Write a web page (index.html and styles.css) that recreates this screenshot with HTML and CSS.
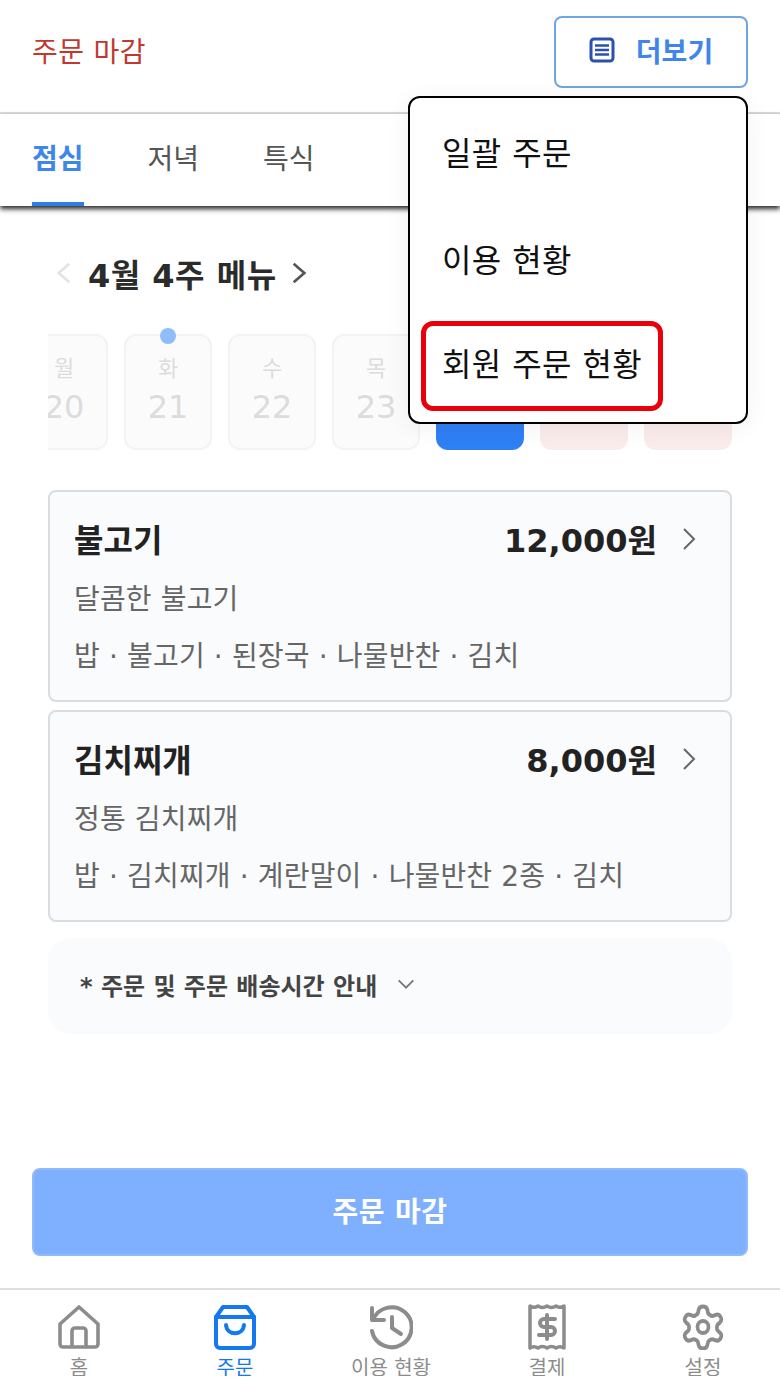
FILE: index.html
```html
<!DOCTYPE html>
<html lang="ko">
<head>
  <meta charset="UTF-8">
  <meta name="viewport" content="width=device-width, initial-scale=1.0">
  <title>주문 마감</title>
  <link rel="stylesheet" href="styles.css">
</head>
<body>
  <div class="app">
    <header class="topbar">
      <h1 class="status">주문 마감</h1>
      <button class="more-btn">
        <svg class="more-icon" viewBox="0 0 26 26" fill="none" stroke="currentColor" stroke-width="3">
          <rect x="2" y="2" width="22" height="22" rx="3"/>
          <path d="M6 8.5h14M6 13h14M6 17.5h14" stroke-width="2.6"/>
        </svg>
        <span>더보기</span>
      </button>
    </header>

    <nav class="tabs">
      <a class="tab active">점심</a>
      <a class="tab">저녁</a>
      <a class="tab">특식</a>
    </nav>

    <main class="content">
      <div class="week">
        <svg class="week-arrow off" viewBox="0 0 24 24" fill="none" stroke="currentColor" stroke-width="2"><path d="M16 5l-8 7 8 7"/></svg>
        <h2>4월 4주 메뉴</h2>
        <svg class="week-arrow" viewBox="0 0 24 24" fill="none" stroke="currentColor" stroke-width="2"><path d="M8 5l8 7-8 7"/></svg>
      </div>

      <div class="days">
        <div class="day past"><span>월</span><b>20</b></div>
        <div class="day past has-dot"><span>화</span><b>21</b></div>
        <div class="day past"><span>수</span><b>22</b></div>
        <div class="day past"><span>목</span><b>23</b></div>
        <div class="day selected"></div>
        <div class="day holiday"></div>
        <div class="day holiday"></div>
      </div>

      <div class="card">
        <div class="card-head">
          <h3>불고기</h3>
          <span class="price">12,000원</span>
          <svg class="card-arrow" viewBox="0 0 24 24" fill="none" stroke="currentColor" stroke-width="2"><path d="M7 2l10 10-10 10"/></svg>
        </div>
        <p class="desc">달콤한 불고기</p>
        <p class="items">밥 · 불고기 · 된장국 · 나물반찬 · 김치</p>
      </div>

      <div class="card">
        <div class="card-head">
          <h3>김치찌개</h3>
          <span class="price">8,000원</span>
          <svg class="card-arrow" viewBox="0 0 24 24" fill="none" stroke="currentColor" stroke-width="2"><path d="M7 2l10 10-10 10"/></svg>
        </div>
        <p class="desc">정통 김치찌개</p>
        <p class="items">밥 · 김치찌개 · 계란말이 · 나물반찬 2종 · 김치</p>
      </div>

      <div class="notice">
        <span>* 주문 및 주문 배송시간 안내</span>
        <svg class="notice-arrow" viewBox="0 0 24 24" fill="none" stroke="currentColor" stroke-width="2"><path d="M4 8l8 8 8-8"/></svg>
      </div>
    </main>

    <div class="action">
      <button class="close-btn">주문 마감</button>
    </div>

    <footer class="bottom-nav">
      <a class="nav-item">
        <svg viewBox="0 0 44 46" fill="none" stroke="currentColor" stroke-width="3.6" stroke-linejoin="round">
          <path d="M3 20L22 3l19 17v20a3 3 0 0 1-3 3H6a3 3 0 0 1-3-3z"/>
          <path d="M15 43V27a3 3 0 0 1 3-3h8a3 3 0 0 1 3 3v16"/>
        </svg>
        <span>홈</span>
      </a>
      <a class="nav-item active">
        <svg viewBox="0 0 44 46" fill="none" stroke="currentColor" stroke-width="4" stroke-linecap="round" stroke-linejoin="round">
          <path d="M3 13L10 3h24l7 10v27a4 4 0 0 1-4 4H7a4 4 0 0 1-4-4z"/>
          <path d="M3 13h38"/>
          <path d="M13 21c1 11 17 11 18 0"/>
        </svg>
        <span>주문</span>
      </a>
      <a class="nav-item">
        <svg viewBox="0 0 44 46" fill="none" stroke="currentColor" stroke-width="4" stroke-linecap="round" stroke-linejoin="round">
          <path d="M3 4v12h12"/>
          <path d="M4 16A20 20 0 1 1 3 27"/>
          <path d="M23 13v11l9 6"/>
        </svg>
        <span>이용 현황</span>
      </a>
      <a class="nav-item">
        <svg viewBox="0 0 44 46" fill="none" stroke="currentColor" stroke-width="3.5" stroke-linecap="round" stroke-linejoin="round">
          <path d="M5 2c3 2 5 2 8 0 3 2 6 2 9 0 3 2 6 2 9 0 3 2 5 2 8 0v42c-3-2-5-2-8 0-3-2-6-2-9 0-3-2-6-2-9 0-3-2-5-2-8 0z"/>
          <path d="M30 15h-11a4 4 0 0 0 0 8h7a4 4 0 0 1 0 8H14M22 11v24" stroke-width="4"/>
        </svg>
        <span>결제</span>
      </a>
      <a class="nav-item">
        <svg viewBox="0 0.5 24 23" preserveAspectRatio="none" fill="none" stroke="currentColor" stroke-width="2" stroke-linecap="round" stroke-linejoin="round">
          <path d="M9.6 3.5c.2-1 1.200-1.700 2.400-1.700s2.200.7 2.400 1.700l.3 1.400c.1.4.4.7.7.9l.9.5c.4.2.8.2 1.200.1l1.400-.5c1-.3 2.100.1 2.700 1.100s.4 2.100-.4 2.800l-1.100.9c-.3.3-.5.7-.5 1.100v1c0 .4.2.8.5 1.100l1.100.9c.8.7 1 1.800.4 2.800s-1.700 1.400-2.700 1.100l-1.400-.5c-.4-.1-.8-.1-1.200.1l-.9.5c-.3.2-.6.5-.7.9l-.3 1.400c-.2 1-1.200 1.700-2.400 1.700s-2.200-.7-2.400-1.700l-.3-1.400c-.1-.4-.4-.7-.7-.9l-.9-.5c-.4-.2-.8-.2-1.200-.1l-1.400.5c-1 .3-2.100-.1-2.700-1.100s-.4-2.100.4-2.800l1.100-.9c.3-.3.5-.7.5-1.100v-1c0-.4-.2-.8-.5-1.100l-1.100-.9c-.8-.7-1-1.800-.4-2.800s1.700-1.400 2.700-1.100l1.400.5c.4.1.8.1 1.200-.1l.9-.5c.3-.2.6-.5.7-.9z"/>
          <circle cx="12" cy="12" r="3"/>
        </svg>
        <span>설정</span>
      </a>
    </footer>

    <div class="dropdown">
      <a class="dropdown-item">일괄 주문</a>
      <a class="dropdown-item">이용 현황</a>
      <a class="dropdown-item marked">회원 주문 현황</a>
    </div>
  </div>
</body>
</html>
```

FILE: styles.css
```css
* {
  margin: 0;
  padding: 0;
  box-sizing: border-box;
}

html,
body {
  height: 100%;
  overflow: hidden;
}

body {
  font-family: "DejaVu Sans", "Noto Sans CJK KR", sans-serif;
  background: #fff;
  color: #1c1c1e;
}

.app {
  position: relative;
  width: 780px;
  height: 1386px;
  display: flex;
  flex-direction: column;
  overflow: hidden;
}

/* top */
.topbar {
  height: 114px;
  flex: none;
  display: flex;
  justify-content: space-between;
  padding: 16px 32px 0;
  border-bottom: 2px solid #dedede;
}

.status {
  margin-top: 17px;
  font-size: 28px;
  line-height: 40px;
  font-weight: 400;
  letter-spacing: 0.4px;
  color: #c0392f;
}

.more-btn {
  width: 194px;
  height: 72px;
  display: flex;
  align-items: center;
  justify-content: center;
  gap: 21px;
  padding-bottom: 4px;
  font: inherit;
  font-size: 28px;
  font-weight: 700;
  color: #3f86ea;
  background: #fff;
  border: 2px solid #6ea5e4;
  border-radius: 8px;
}

.more-icon {
  width: 26px;
  height: 26px;
  color: #2b50b0;
}

.tabs {
  height: 92px;
  flex: none;
  display: flex;
  gap: 64px;
  padding: 0 32px;
  box-shadow: 0 3px 5px rgba(0, 0, 0, 0.85);
  position: relative;
}

.tab {
  height: 92px;
  padding-top: 25px;
  font-size: 28px;
  line-height: 42px;
  color: #555;
}

.tab.active {
  color: #3f86ea;
  font-weight: 700;
  border-bottom: 4px solid #2f7de1;
}

/* content */
.content {
  flex: 1;
  padding: 0 48px;
}

.week {
  height: 128px;
  display: flex;
  align-items: center;
  padding-top: 6px;
}

.week h2 {
  font-size: 32px;
  font-weight: 700;
  letter-spacing: 0.5px;
  color: #2b2b2b;
  margin: 0 6px 0 8px;
}

.week-arrow {
  width: 32px;
  height: 32px;
  color: #555;
}

.week-arrow.off {
  color: #e3e3e3;
}

.days {
  display: flex;
  gap: 16px;
  width: 684px;
  height: 116px;
  overflow: hidden;
  margin-bottom: 40px;
}

.day {
  flex: none;
  width: 88px;
  height: 116px;
  display: flex;
  flex-direction: column;
  align-items: center;
  padding-top: 17px;
  border-radius: 12px;
  border: 2px solid transparent;
  font-size: 22px;
}

.day:first-child {
  margin-left: -28px;
}

.day span {
  line-height: 32px;
}

.day b {
  margin-top: 1px;
  font-weight: 400;
  font-size: 32px;
  line-height: 42px;
}

.day.past {
  background: #fbfbfb;
  border-color: #f3f3f3;
  color: #dcdcdc;
}

.day.selected {
  background: #2f7ff5;
}

.day.holiday {
  background: #f9ecea;
}

.has-dot::after {
  content: "";
  position: absolute;
  top: 328px;
  left: 160px;
  width: 16px;
  height: 16px;
  border-radius: 50%;
  background: #90bdf8;
}

.card {
  height: 212px;
  margin-bottom: 8px;
  padding: 21px 24px 0;
  background: #f9fbfd;
  border: 2px solid #d8dde2;
  border-radius: 8px;
}

.card-head {
  display: flex;
  align-items: center;
  height: 50px;
  margin-bottom: 9px;
}

.card-head h3 {
  flex: 1;
  font-size: 32px;
  font-weight: 700;
  color: #222;
}

.price {
  font-size: 32px;
  font-weight: 700;
  color: #222;
}

.card-arrow {
  width: 24px;
  height: 24px;
  margin: 2px 5px 0 20px;
  color: #666;
}

.desc,
.items {
  font-size: 28px;
  line-height: 56px;
  letter-spacing: 0.15px;
  color: #666;
}

.items {
  margin-top: 1px;
}

.notice {
  height: 96px;
  margin-top: 16px;
  display: flex;
  align-items: center;
  gap: 18px;
  padding: 0 32px 4px;
  background: #f9fbfd;
  border-radius: 24px;
  font-size: 24px;
  font-weight: 700;
  color: #444;
}

.notice-arrow {
  width: 22px;
  height: 22px;
  color: #777;
}

.action {
  flex: none;
  padding: 0 32px;
  margin-bottom: 32px;
}

.close-btn {
  display: block;
  width: 100%;
  height: 88px;
  padding-bottom: 4px;
  font: inherit;
  font-size: 28px;
  font-weight: 700;
  letter-spacing: 0.4px;
  color: #fff;
  background: #7fb0ff;
  border: 2px solid #90bbfb;
  border-radius: 8px;
}

/* bottom nav */
.bottom-nav {
  flex: none;
  height: 88px;
  margin-bottom: 10px;
  padding-left: 1px;
  display: grid;
  grid-template-columns: repeat(5, 156px);
  border-top: 2px solid #dedede;
  overflow: hidden;
  background: #fff;
}

.nav-item {
  display: flex;
  flex-direction: column;
  align-items: center;
  padding-top: 14px;
  color: #8c8c8c;
  font-size: 20px;
  line-height: 28px;
}

.nav-item svg {
  width: 44px;
  height: 46px;
  flex: none;
  margin-bottom: 4px;
}

.nav-item.active {
  color: #1478f0;
}

/* popup */
.dropdown {
  position: absolute;
  top: 96px;
  left: 408px;
  width: 340px;
  height: 328px;
  padding: 3px 11px;
  background: #fff;
  border: 2px solid #000;
  border-radius: 12px;
  box-shadow: 0 4px 24px rgba(0, 0, 0, 0.06);
}

.dropdown-item {
  display: block;
  height: 107px;
  padding: 30px 0 0 21px;
  font-size: 32px;
  line-height: 46px;
  letter-spacing: 0.4px;
  color: #111;
}

.dropdown-item.marked {
  width: 242px;
  height: 90px;
  margin-top: 6px;
  padding: 16px 0 0 16px;
  border: 5.5px solid #e8000d;
  border-radius: 12px;
  white-space: nowrap;
}
```
